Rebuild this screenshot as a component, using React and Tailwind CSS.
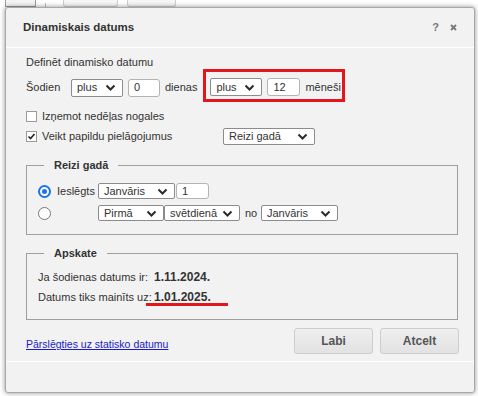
import React from 'react';

const font = { fontFamily: '"Liberation Sans", Arial, sans-serif' };

function Chevron() {
  return (
    <svg width="11" height="7" viewBox="0 0 11 7" className="shrink-0">
      <path d="M1.5 1.5 5.5 5.5 9.5 1.5" fill="none" stroke="#2b2b2b" strokeWidth="2" />
    </svg>
  );
}

function Select({ value, className }) {
  return (
    <div className={`flex items-center justify-between bg-white border border-[#8c8c8c] rounded-[2px] pl-[5px] pr-[6px] text-[11px] text-[#333] ${className}`}>
      <span>{value}</span>
      <Chevron />
    </div>
  );
}

function Input({ value, className }) {
  return (
    <div className={`flex items-center bg-white border border-[#b4b4b4] rounded-[3px] pl-[5px] text-[11px] text-[#333] ${className}`}>
      {value}
    </div>
  );
}

function Checkbox({ checked }) {
  return (
    <div className="w-[11px] h-[11px] bg-white border border-[#9a9a9a] flex items-center justify-center shrink-0">
      {checked && (
        <svg width="9" height="9" viewBox="0 0 9 9">
          <path d="M1.5 4.5 3.5 6.5 7.5 2" fill="none" stroke="#222" strokeWidth="1.6" />
        </svg>
      )}
    </div>
  );
}

function Radio({ checked }) {
  return checked ? (
    <div className="w-[13px] h-[13px] rounded-full border-2 border-[#1a73e8] bg-white flex items-center justify-center shrink-0">
      <div className="w-[5px] h-[5px] rounded-full bg-[#1a73e8]" />
    </div>
  ) : (
    <div className="w-[13px] h-[13px] rounded-full border border-[#767676] bg-white shrink-0" />
  );
}

export default function App() {
  return (
    <div className="w-[478px] h-[396px] bg-white overflow-hidden text-[#333]" style={font}>
      {/* toolbar behind the dialog */}
      <div className="h-[7px] flex items-end relative">
        <div className="ml-[5px] w-[31px] h-[7px] bg-[#f4f4f4] border border-t-0 border-[#9a9a9a]" />
        <div className="ml-[9px] w-px h-[4px] bg-[#bbb]" />
        <div className="ml-[17px] w-[55px] h-[7px] bg-[#f6f6f6] border border-t-0 border-[#cfcfcf] rounded-b-[3px]" />
        <div className="ml-[9px] w-[49px] h-[7px] bg-[#f6f6f6] border border-t-0 border-[#cfcfcf] rounded-b-[3px]" />
      </div>

      <div className="ml-[5px] w-[470px] h-[386px] bg-[#f2f2f2] border border-[#a8a8a8] rounded-[3px] shadow-[0_0_5px_rgba(0,0,0,0.45)] flex flex-col relative">
        {/* header */}
        <div className="h-[40px] shrink-0 flex items-center justify-between pl-[17px] pr-[17px] border-b border-white">
          <span className="text-[11.5px] font-bold text-[#333]">Dinamiskais datums</span>
          <div className="flex items-center gap-[11px] text-[#777]">
            <span className="text-[11px] font-bold">?</span>
            <svg width="7" height="7" viewBox="0 0 7 7">
              <path d="M1 1 6 6M6 1 1 6" stroke="#777" strokeWidth="1.8" />
            </svg>
          </div>
        </div>

        {/* body */}
        <div className="flex-1 flex flex-col pl-[20px] pr-[16px] text-[11px]">
          <div className="mt-[7px] h-[14px] leading-[14px]">Definēt dinamisko datumu</div>

          <div className="flex items-start h-[33px]">
            <div className="flex items-center h-[33px] pt-[4px]">
              <span className="w-[45px]">Šodien</span>
              <Select value="plus" className="w-[52px] h-[18px]" />
              <Input value="0" className="ml-[5px] w-[32px] h-[18px]" />
              <span className="ml-[5px]">dienas</span>
            </div>
            <div className="ml-[6px] h-[33px] border-[3px] border-[#e3161c] flex items-start pt-[6px] pl-[4px] pr-[1px]">
              <Select value="plus" className="w-[52px] h-[18px]" />
              <Input value="12" className="ml-[5px] w-[33px] h-[18px]" />
              <span className="ml-[5px] leading-[18px]">mēneši</span>
            </div>
          </div>

          <div className="mt-[5px] h-[18px] flex items-center">
            <Checkbox />
            <span className="ml-[5px]">Izņemot nedēļas nogales</span>
          </div>
          <div className="mt-[2px] h-[18px] flex items-center">
            <div className="w-[197px] flex items-center">
              <Checkbox checked />
              <span className="ml-[5px]">Veikt papildu pielāgojumus</span>
            </div>
            <Select value="Reizi gadā" className="w-[92px] h-[17px]" />
          </div>

          <fieldset className="mt-[13px] border border-[#9e9e9e] pt-[11px] pb-[13px] pl-[11px]">
            <legend className="ml-[6px] px-[10px] text-[11px] font-bold leading-[14px]">Reizi gadā</legend>
            <div className="flex items-center h-[16px]">
              <Radio checked />
              <span className="ml-[6px] w-[41px]">Ieslēgts</span>
              <Select value="Janvāris" className="w-[77px] h-[16px]" />
              <Input value="1" className="ml-[1px] w-[33px] h-[16px]" />
            </div>
            <div className="flex items-center h-[16px] mt-[6px]">
              <Radio />
              <span className="ml-[6px] w-[41px]" />
              <Select value="Pirmā" className="w-[66px] h-[16px]" />
              <Select value="svētdienā" className="w-[76px] h-[16px]" />
              <span className="ml-[5px] w-[16px]">no</span>
              <Select value="Janvāris" className="w-[77px] h-[16px]" />
            </div>
          </fieldset>

          <fieldset className="mt-[11px] border border-[#9e9e9e] pt-[7px] pb-[12px] pl-[11px]">
            <legend className="ml-[6px] px-[10px] text-[11px] font-bold leading-[14px]">Apskate</legend>
            <div className="flex items-center h-[20px]">
              <span className="w-[116px]">Ja šodienas datums ir:</span>
              <span className="text-[12px] font-bold">1.11.2024.</span>
            </div>
            <div className="flex items-center h-[20px]">
              <span className="w-[116px]">Datums tiks mainīts uz:</span>
              <span className="relative text-[12px] font-bold">
                1.01.2025.
                <span className="absolute left-[-8px] top-[15px] w-[82px] h-[3px] bg-[#e3161c]" />
              </span>
            </div>
          </fieldset>

          <div className="mt-[8px] flex items-end justify-between">
            <a className="mb-[1px] text-[10.5px] text-[#1a1ac8] underline">Pārslēgties uz statisko datumu</a>
            <div className="flex gap-[7px] mr-[-1px]">
              <button className="w-[79px] h-[26px] rounded-[3px] border border-[#cdcdcd] bg-gradient-to-b from-[#efefef] to-[#e2e2e2] text-[12px] font-bold text-[#555]">Labi</button>
              <button className="w-[79px] h-[26px] rounded-[3px] border border-[#cdcdcd] bg-gradient-to-b from-[#efefef] to-[#e2e2e2] text-[12px] font-bold text-[#555]">Atcelt</button>
            </div>
          </div>
        </div>

        <div className="h-[31px] shrink-0 border-t border-white" />
      </div>
    </div>
  );
}
